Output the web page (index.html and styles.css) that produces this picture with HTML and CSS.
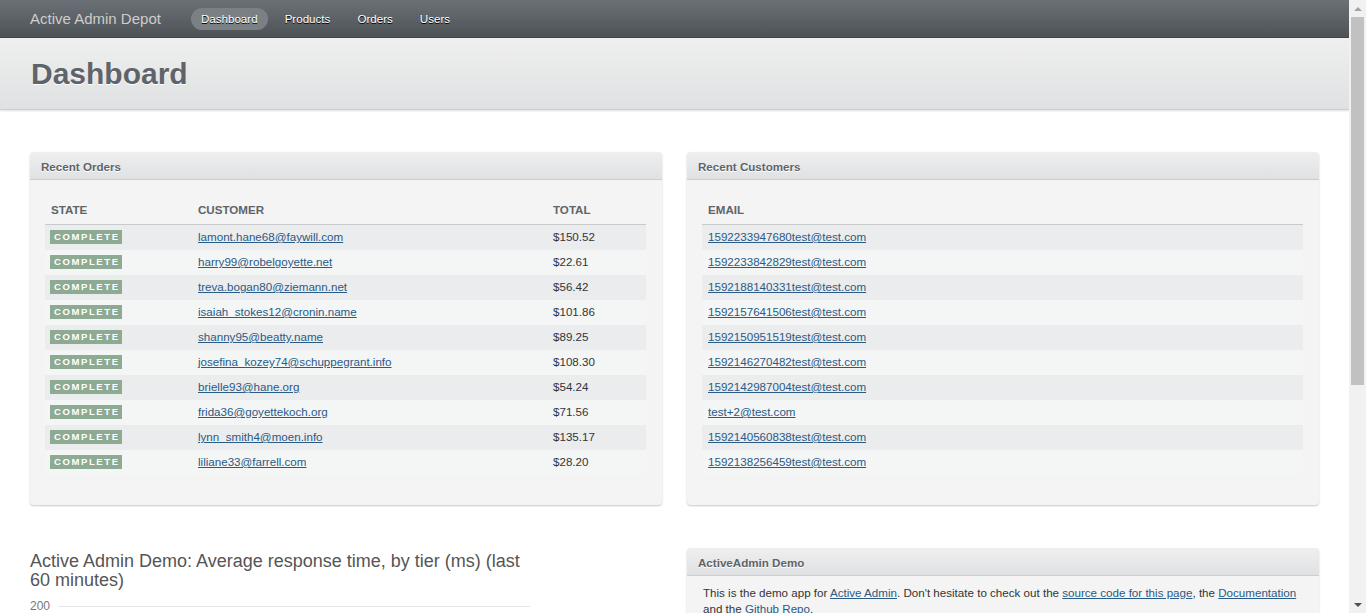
FILE: index.html
```html
<!DOCTYPE html>
<html>
<head>
<meta charset="utf-8">
<title>Dashboard | Active Admin Depot</title>
<link rel="stylesheet" href="styles.css">
</head>
<body>
<div class="page">
<div class="header">
  <div class="site-title">Active Admin Depot</div>
  <ul class="tabs">
    <li class="tab current">Dashboard</li>
    <li class="tab">Products</li>
    <li class="tab">Orders</li>
    <li class="tab">Users</li>
  </ul>
</div>
<div class="title-bar">
  <h2 class="page-title">Dashboard</h2>
</div>
<div class="content">
  <div class="columns">
    <div class="column">
      <div class="panel">
        <h3 class="panel-head">Recent Orders</h3>
        <div class="panel-body">
          <table class="index-table orders">
            <thead><tr><th class="c1">STATE</th><th class="c2">CUSTOMER</th><th class="c3">TOTAL</th></tr></thead>
            <tbody>
              <tr class="odd"><td><span class="badge">COMPLETE</span></td><td><a>lamont.hane68@faywill.com</a></td><td>$150.52</td></tr>
              <tr class="even"><td><span class="badge">COMPLETE</span></td><td><a>harry99@robelgoyette.net</a></td><td>$22.61</td></tr>
              <tr class="odd"><td><span class="badge">COMPLETE</span></td><td><a>treva.bogan80@ziemann.net</a></td><td>$56.42</td></tr>
              <tr class="even"><td><span class="badge">COMPLETE</span></td><td><a>isaiah_stokes12@cronin.name</a></td><td>$101.86</td></tr>
              <tr class="odd"><td><span class="badge">COMPLETE</span></td><td><a>shanny95@beatty.name</a></td><td>$89.25</td></tr>
              <tr class="even"><td><span class="badge">COMPLETE</span></td><td><a>josefina_kozey74@schuppegrant.info</a></td><td>$108.30</td></tr>
              <tr class="odd"><td><span class="badge">COMPLETE</span></td><td><a>brielle93@hane.org</a></td><td>$54.24</td></tr>
              <tr class="even"><td><span class="badge">COMPLETE</span></td><td><a>frida36@goyettekoch.org</a></td><td>$71.56</td></tr>
              <tr class="odd"><td><span class="badge">COMPLETE</span></td><td><a>lynn_smith4@moen.info</a></td><td>$135.17</td></tr>
              <tr class="even"><td><span class="badge">COMPLETE</span></td><td><a>liliane33@farrell.com</a></td><td>$28.20</td></tr>
            </tbody>
          </table>
        </div>
      </div>
    </div>
    <div class="column">
      <div class="panel">
        <h3 class="panel-head">Recent Customers</h3>
        <div class="panel-body">
          <table class="index-table">
            <thead><tr><th>EMAIL</th></tr></thead>
            <tbody>
              <tr class="odd"><td><a>1592233947680test@test.com</a></td></tr>
              <tr class="even"><td><a>1592233842829test@test.com</a></td></tr>
              <tr class="odd"><td><a>1592188140331test@test.com</a></td></tr>
              <tr class="even"><td><a>1592157641506test@test.com</a></td></tr>
              <tr class="odd"><td><a>1592150951519test@test.com</a></td></tr>
              <tr class="even"><td><a>1592146270482test@test.com</a></td></tr>
              <tr class="odd"><td><a>1592142987004test@test.com</a></td></tr>
              <tr class="even"><td><a>test+2@test.com</a></td></tr>
              <tr class="odd"><td><a>1592140560838test@test.com</a></td></tr>
              <tr class="even"><td><a>1592138256459test@test.com</a></td></tr>
            </tbody>
          </table>
        </div>
      </div>
    </div>
  </div>
  <div class="columns second">
    <div class="column">
      <div class="chart">
        <h3 class="chart-title">Active Admin Demo: Average response time, by tier (ms) (last 60 minutes)</h3>
        <div class="axis-row"><span class="axis-label">200</span><span class="axis-line"></span></div>
        <div class="axis-row"><span class="axis-label">150</span><span class="axis-line"></span></div>
        <div class="axis-row"><span class="axis-label">100</span><span class="axis-line"></span></div>
        <div class="axis-row"><span class="axis-label">50</span><span class="axis-line"></span></div>
      </div>
    </div>
    <div class="column">
      <div class="panel">
        <h3 class="panel-head">ActiveAdmin Demo</h3>
        <div class="panel-body demo">
          <p>This is the demo app for <a>Active Admin</a>. Don't hesitate to check out the <a>source code for this page</a>, the <a>Documentation</a> and the <a>Github Repo</a>.</p>
        </div>
      </div>
    </div>
  </div>
</div>
</div>
<div class="scrollbar" aria-hidden="true">
  <div class="sb-arrow up"></div>
  <div class="sb-thumb"></div>
  <div class="sb-fill"></div>
  <div class="sb-arrow down"></div>
</div>
</body>
</html>
```
FILE: styles.css
```css
html, body {
  margin: 0;
  padding: 0;
}
body {
  font-family: "Liberation Sans", Arial, sans-serif;
  font-size: 11.6px;
  line-height: 1.5;
  color: #323537;
  background: #fff;
}
.page {
  margin-right: 17px;
}
.scrollbar {
  position: fixed;
  top: 0;
  right: 0;
  bottom: 0;
  width: 17px;
  background: #f1f1f1;
  display: flex;
  flex-direction: column;
  align-items: center;
}
.sb-arrow {
  height: 17px;
  width: 17px;
  display: flex;
  align-items: center;
  justify-content: center;
  flex: none;
}
.sb-arrow::before {
  content: "";
  width: 0;
  height: 0;
  border-left: 4px solid transparent;
  border-right: 4px solid transparent;
}
.sb-arrow.up::before {
  border-bottom: 4px solid #a3a3a3;
}
.sb-arrow.down::before {
  border-top: 4px solid #505050;
}
.sb-thumb {
  width: 13px;
  height: 368px;
  background: #c1c1c1;
  flex: none;
}
.sb-fill {
  flex: 1;
}
.header {
  height: 38px;
  display: flex;
  align-items: center;
  padding: 0 30px;
  background: linear-gradient(to bottom, #6a7176, #4d5256);
  border-bottom: 1px solid #444;
  box-sizing: border-box;
}
.site-title {
  font-size: 15px;
  color: #cdcdcd;
  margin-right: 30px;
  margin-top: 1px;
}
.tabs {
  display: flex;
  list-style: none;
  margin: 1px 0 0;
  padding: 0;
}
.tab {
  font-size: 11.6px;
  color: #fff;
  padding: 0 10px;
  height: 22px;
  line-height: 22px;
  margin-right: 7px;
  text-shadow: #000 0 1px 0;
  border-radius: 11px;
}
.tab.current {
  background: #7b8085;
}
.title-bar {
  height: 72px;
  background: linear-gradient(to bottom, #efefef, #dfe1e2);
  border-bottom: 1px solid #cdcdcd;
  box-shadow: 0 1px 2px rgba(0,0,0,0.12);
  display: flex;
  align-items: center;
  padding: 0 31px;
  box-sizing: border-box;
}
.page-title {
  margin: 0;
  font-size: 30px;
  font-weight: bold;
  color: #5e6469;
  text-shadow: #fff 0 1px 0;
}
.content {
  padding: 42px 30px 40px;
}
.columns {
  display: flex;
  gap: 25px;
}
.columns.second {
  margin-top: 43px;
}
.column {
  flex: 1 1 0;
  min-width: 0;
}
.panel {
  background: #f4f4f4;
  border-radius: 4px;
  box-shadow: 0 1px 2px rgba(0,0,0,0.22);
}
.panel-head {
  margin: 0;
  height: 28px;
  line-height: 27px;
  padding: 1px 11px 0;
  font-size: 11.6px;
  font-weight: bold;
  color: #5e6469;
  background: linear-gradient(to bottom, #efefef, #dfe1e2);
  border-bottom: 1px solid #cdcdcd;
  border-radius: 4px 4px 0 0;
  box-sizing: border-box;
  text-shadow: #fff 0 1px 0;
}
.panel-body {
  padding: 15px 16px 30px 15px;
}
.index-table {
  width: 100%;
  border-collapse: collapse;
  border-spacing: 0;
}
.index-table th {
  text-align: left;
  font-size: 11.6px;
  font-weight: bold;
  color: #5e6469;
  padding: 7px 6px 7px;
  line-height: 15px;
  border-bottom: 1px solid #c9cacb;
}
.orders .c1 { width: 135px; }
.orders .c2 { width: 343px; }
.index-table td {
  height: 25px;
  padding: 0 6px 1px;
  font-size: 11.6px;
  color: #323537;
  line-height: 24px;
  box-sizing: border-box;
}
.index-table tr.odd td { background: #ebecee; }
.index-table tr.even td { background: #f4f5f5; }
a {
  color: #2a5a86;
  text-decoration: underline;
}
.badge {
  display: inline-block;
  background: #8daa92;
  color: #fff;
  font-size: 9.5px;
  font-weight: bold;
  letter-spacing: 1.6px;
  line-height: 14px;
  height: 14px;
  width: 72px;
  padding-left: 4px;
  box-sizing: border-box;
  vertical-align: middle;
  margin-left: -1px;
  margin-top: -1px;
}
.chart {
  width: 500px;
  padding-top: 4px;
}
.chart-title {
  margin: 0 0 9px;
  font-size: 18px;
  font-weight: normal;
  line-height: 19px;
  color: #555;
}
.axis-row {
  display: flex;
  height: 56px;
  align-items: flex-start;
}
.axis-label {
  width: 28px;
  font-size: 12px;
  color: #777;
  line-height: 14px;
}
.axis-line {
  flex: 1;
  border-top: 1px solid #e6e6e6;
  margin-top: 7px;
}
.panel-body.demo {
  padding: 9px 16px 20px;
}
.demo p {
  margin: 0;
  font-size: 11.6px;
  line-height: 16px;
}
```
